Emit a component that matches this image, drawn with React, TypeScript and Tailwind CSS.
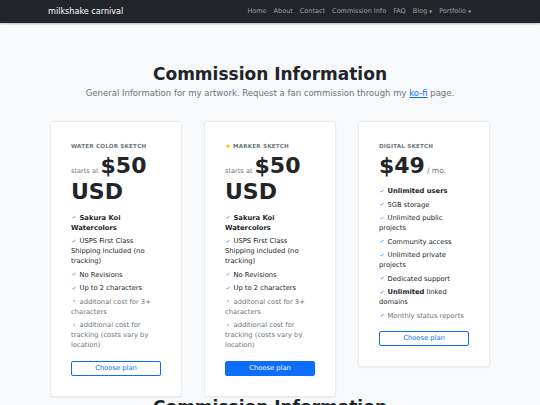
import { ReactNode } from "react";

type Feature = { text: ReactNode; ok?: boolean; muted?: boolean };

const sketchFeatures: Feature[] = [
  { text: <strong>Sakura Koi Watercolors</strong>, ok: true },
  { text: "USPS First Class Shipping included (no tracking)", ok: true },
  { text: "No Revisions", ok: true },
  { text: "Up to 2 characters", ok: true },
  { text: "additonal cost for 3+ characters", muted: true },
  { text: "additional cost for tracking (costs vary by location)", muted: true },
];

const digitalFeatures: Feature[] = [
  { text: <strong>Unlimited users</strong>, ok: true },
  { text: "5GB storage", ok: true },
  { text: "Unlimited public projects", ok: true },
  { text: "Community access", ok: true },
  { text: "Unlimited private projects", ok: true },
  { text: "Dedicated support", ok: true },
  {
    text: (
      <>
        <strong>Unlimited</strong> linked domains
      </>
    ),
    ok: true,
  },
  { text: "Monthly status reports", ok: true, muted: true },
];

function Star() {
  return (
    <svg width="6" height="6" viewBox="0 0 24 24" className="mr-[2px] inline-block">
      <path
        d="M12 2l2.9 6.6 7.1.6-5.4 4.7 1.6 7.1L12 17.3 5.8 21l1.6-7.1L2 9.2l7.1-.6z"
        fill="#ffc107"
      />
    </svg>
  );
}

function Check() {
  return (
    <svg width="4" height="4" viewBox="0 0 8 8" className="mr-[3.5px] ml-[1px] inline-block align-[0.5px]">
      <path d="M1 4.3l2 2L7 1.5" fill="none" stroke="#0d6efd" strokeWidth="1.3" />
    </svg>
  );
}

function Cross() {
  return (
    <svg width="4" height="4" viewBox="0 0 8 8" className="mr-[3.5px] ml-[1px] inline-block align-[0.5px]">
      <path d="M1.5 1.5l5 5M6.5 1.5l-5 5" fill="none" stroke="#adb5bd" strokeWidth="1.2" />
    </svg>
  );
}

function FeatureList({ items }: { items: Feature[] }) {
  return (
    <ul className="mb-[10.5px] flex flex-col gap-[3.5px] text-[6.75px] leading-[10px]">
      {items.map((f, i) => (
        <li key={i} className={f.muted ? "text-[#6c757d]" : "text-[#212529]"}>
          {f.ok ? <Check /> : <Cross />}
          {f.text}
        </li>
      ))}
    </ul>
  );
}

function PlanCard({
  title,
  star,
  price,
  primary,
  monthly,
  items,
}: {
  title: string;
  star?: boolean;
  price: string;
  primary?: boolean;
  monthly?: boolean;
  items: Feature[];
}) {
  return (
    <div className="w-[132px] rounded-[3px] border border-[#e9ecef] bg-white p-[20px] shadow-[0_1px_2px_rgba(0,0,0,0.05)]">
      <h6 className="flex items-center text-[5.6px] font-bold uppercase leading-[9px] tracking-[0.2px] text-[#6c757d]">
        {star && <Star />}
        {title}
      </h6>
      <div className="mb-[7px] mt-[2px] text-[22px] font-bold leading-[26.4px] text-[#212529]">
        {monthly ? (
          <>
            {price}
            <span className="ml-[2px] text-[7.5px] font-normal leading-none text-[#6c757d]">/ mo.</span>
          </>
        ) : (
          <>
            <span className="mr-[2px] text-[6.6px] font-normal leading-none text-[#6c757d]">starts at</span>
            {price} USD
          </>
        )}
      </div>
      <FeatureList items={items} />
      <button
        className={
          primary
            ? "block h-[15px] w-full rounded-[2px] border border-[#0d6efd] bg-[#0d6efd] text-[6.75px] leading-[13px] text-white"
            : "block h-[15px] w-full rounded-[2px] border border-[#0d6efd] bg-white text-[6.75px] leading-[13px] text-[#0d6efd]"
        }
      >
        Choose plan
      </button>
    </div>
  );
}

export default function App() {
  const links = ["Home", "About", "Contact", "Commission Info", "FAQ"];
  return (
    <div className="min-h-[405px] bg-[#f8f9fa] font-['DejaVu_Sans',sans-serif]">
      <nav className="relative z-10 flex h-[23px] items-center bg-[#212529] pl-[48px] pr-[69px] shadow-[0_1px_2px_rgba(0,0,0,0.25)]">
        <span className="text-[8.1px] text-white">milkshake carnival</span>
        <div className="ml-auto flex items-center gap-[7px] text-[6.5px] text-[#ffffff8c]">
          {links.map((l) => (
            <span key={l}>{l}</span>
          ))}
          <span className="flex items-center">
            Blog<span className="ml-[2px] text-[4px]">▼</span>
          </span>
          <span className="flex items-center">
            Portfolio<span className="ml-[2px] text-[4px]">▼</span>
          </span>
        </div>
      </nav>

      <header className="pt-[41px] text-center">
        <h1 className="text-[17px] font-bold leading-[20.4px] text-[#212529]">Commission Information</h1>
        <p className="mt-[3px] text-[8.5px] leading-[13px] text-[#6c757d]">
          General Information for my artwork. Request a fan commission through my{" "}
          <a className="text-[#0d6efd] underline">ko-fi</a> page.
        </p>
      </header>

      <section className="mt-[20.5px] flex items-start justify-center gap-[22px]">
        <PlanCard title="Water color sketch" price="$50" items={sketchFeatures} />
        <PlanCard title="Marker sketch" star price="$50" primary items={sketchFeatures} />
        <PlanCard title="Digital sketch" price="$49" monthly items={digitalFeatures} />
      </section>

      <h2 className="text-center text-[17px] font-bold leading-[20.4px] text-[#212529]">
        Commission Information
      </h2>
    </div>
  );
}
